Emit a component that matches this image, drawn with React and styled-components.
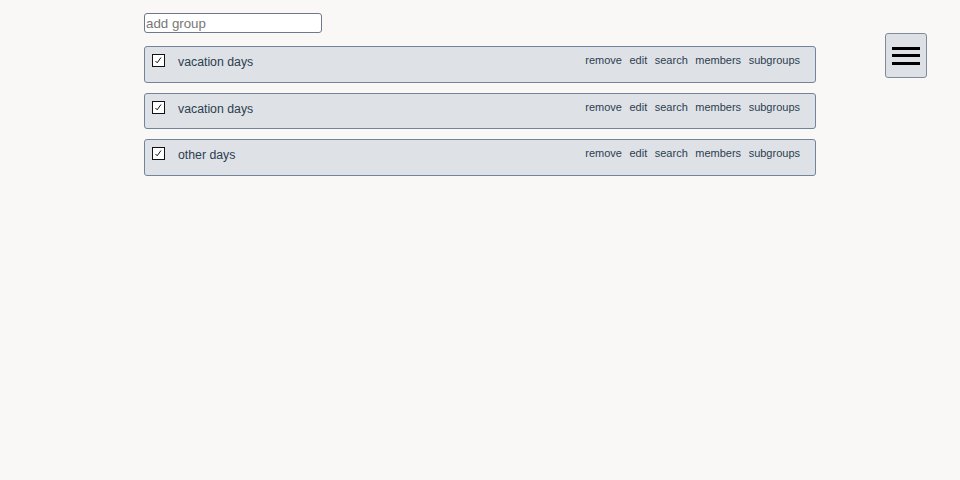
import React from "react";
import styled, { createGlobalStyle } from "styled-components";

const GlobalStyle = createGlobalStyle`
    body {
        margin: 0;
        background: #f9f8f6;
        font-family: "Liberation Sans", Arial, sans-serif;
        color: #2c3e50;
    }
`

const Page = styled.div`
    display: flex;
    justify-content: space-between;
    padding: 13px 33px 0 144px;
`

const Main = styled.div`
    display: flex;
    flex-direction: column;
    width: 672px;
`

const AddInput = styled.input`
    box-sizing: border-box;
    width: 178px;
    height: 20px;
    margin: 0 0 13px 0;
    padding: 0 1px;
    border: 1px solid #6c7a89;
    border-radius: 3px;
    background: #fff;
    font-family: "Liberation Sans", Arial, sans-serif;
    font-size: 13.3px;
    color: #333;
    &::placeholder { color: #777; }
`

const List = styled.div`
    display: flex;
    flex-direction: column;
    gap: 10px;
`

const Row = styled.div`
    box-sizing: border-box;
    height: 36.5px;
    display: flex;
    align-items: flex-start;
    padding: 7px 15px 0 7px;
    background: #dee2e6;
    border: 1px solid #71849a;
    border-radius: 3px;
`

const Check = styled.span`
    box-sizing: border-box;
    width: 13px;
    height: 13px;
    margin: 0 13px 0 0;
    border: 1px solid #111;
    background: #fff;
    display: flex;
`

const Name = styled.span`
    margin-top: 1px;
    font-size: 12.3px;
    line-height: 15px;
    color: #2c3e50;
    flex: 1;
`

const Actions = styled.div`
    display: flex;
    gap: 7.5px;
    margin-top: -1px;
    font-size: 11px;
    line-height: 14px;
    color: #2c3e50;
`

const MenuButton = styled.button`
    box-sizing: border-box;
    width: 42px;
    height: 45px;
    margin-top: 20px;
    background: #dde1e5;
    border: 1px solid #7d8c9c;
    border-radius: 3px;
    display: flex;
    flex-direction: column;
    align-items: center;
    justify-content: center;
    gap: 4.5px;
    padding: 0;
`

const Bar = styled.span`
    display: block;
    width: 28px;
    height: 3px;
    background: #000;
`

const groups = ["vacation days", "vacation days", "other days"]

const App = () => {
    return (
        <>
        <GlobalStyle/>
        <Page>
            <Main>
                <AddInput placeholder="add group"/>
                <List>
                    {groups.map((g, i) => (
                        <Row key={i}>
                            <Check>
                                <svg width="11" height="11" viewBox="0 0 11 11">
                                    <path d="M2.5 6 L4.2 7.8 L8 2.5" fill="none" stroke="#111" strokeWidth="1"/>
                                </svg>
                            </Check>
                            <Name>{g}</Name>
                            <Actions>
                                <span>remove</span>
                                <span>edit</span>
                                <span>search</span>
                                <span>members</span>
                                <span>subgroups</span>
                            </Actions>
                        </Row>
                    ))}
                </List>
            </Main>
            <MenuButton>
                <Bar/>
                <Bar/>
                <Bar/>
            </MenuButton>
        </Page>
        </>
    )
}

export default App
